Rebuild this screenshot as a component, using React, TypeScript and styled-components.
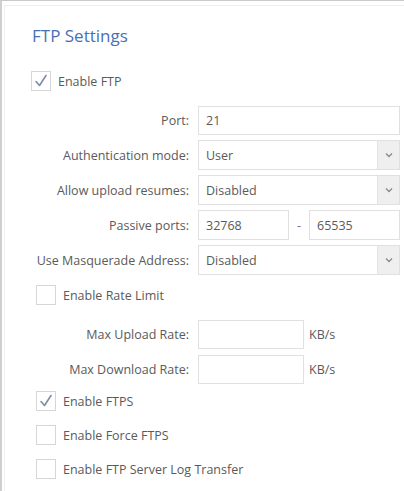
import React from "react";
import styled, { createGlobalStyle } from "styled-components";

const Global = createGlobalStyle`
  html, body { margin: 0; padding: 0; background: #fff; }
  body { font-family: "Open Sans", "Noto Sans", sans-serif; color: #555; }
`;

const Frame = styled.div`
  width: 404px;
  height: 491px;
  box-sizing: border-box;
  border-top: 1px solid #c9c9c9;
  border-left: 2px solid #cfcfcf;
  padding: 4px 0 0 2px;
  overflow: hidden;
`;

const Panel = styled.div`
  border-top: 1px solid #eeeeee;
  border-left: 1px solid #eeeeee;
  padding: 18px 4px 0 26px;
  height: 100%;
  box-sizing: border-box;
`;

const Title = styled.h2`
  margin: 0 0 0 1px;
  font-size: 17px;
  line-height: 24px;
  font-weight: 400;
  color: #4a6fb5;
`;

const CheckRow = styled.label<{ $indent?: number; $mt?: number }>`
  display: flex;
  align-items: center;
  gap: 7px;
  height: 20px;
  margin-top: ${(p) => p.$mt ?? 0}px;
  margin-left: ${(p) => p.$indent ?? 0}px;
  font-size: 12.5px;
  color: #5a5a5a;
`;

const Box = styled.span`
  width: 18px;
  height: 18px;
  border: 1px solid #d6d6d6;
  background: #fff;
  display: flex;
  align-items: center;
  justify-content: center;
  flex: none;
`;

const Form = styled.div<{ $mt?: number; $gap?: number }>`
  display: grid;
  grid-template-columns: 163px 202px;
  column-gap: 9px;
  row-gap: ${(p) => p.$gap ?? 5}px;
  margin-top: ${(p) => p.$mt ?? 0}px;
  margin-left: -5px;
`;

const Label = styled.div`
  text-align: right;
  font-size: 12.5px;
  display: flex;
  align-items: center;
  justify-content: flex-end;
  white-space: nowrap;
  color: #5a5a5a;
`;

const Field = styled.div<{ $h?: number }>`
  height: ${(p) => p.$h ?? 30}px;
  display: flex;
  align-items: center;
`;

const Input = styled.div<{ $w?: number }>`
  box-sizing: border-box;
  height: 100%;
  width: ${(p) => (p.$w ? p.$w + "px" : "100%")};
  border: 1px solid #e0e0e0;
  padding: 0 7px;
  display: flex;
  align-items: center;
  font-size: 12.5px;
  color: #5a5a5a;
  background: #fff;
`;

const Select = styled.div`
  box-sizing: border-box;
  height: 100%;
  width: 100%;
  border: 1px solid #e0e0e0;
  display: flex;
  align-items: stretch;
  font-size: 12.5px;
  color: #5a5a5a;
`;

const SelectText = styled.div`
  flex: 1;
  display: flex;
  align-items: center;
  padding-left: 7px;
`;

const Arrow = styled.div`
  width: 21px;
  background: #efefef;
  border-left: 1px solid #e3e3e3;
  display: flex;
  align-items: center;
  justify-content: center;
`;

const Dash = styled.div`
  width: 20px;
  text-align: center;
  font-size: 12.5px;
  color: #777;
`;

const Unit = styled.div`
  margin-left: 5px;
  font-size: 12.5px;
  color: #5a5a5a;
`;

const Check = () => (
  <svg width="14" height="14" viewBox="0 0 14 14">
    <path d="M2 7.5 L5.5 11.5 L12 1.5" fill="none" stroke="#7d8ca6" strokeWidth="1.6" strokeLinecap="round" strokeLinejoin="round" />
  </svg>
);

const Chevron = () => (
  <svg width="8" height="6" viewBox="0 0 8 6">
    <path d="M1 1.5 L4 4.5 L7 1.5" fill="none" stroke="#8a8a8a" strokeWidth="1.3" />
  </svg>
);

const Checkbox = ({ checked, label, indent, mt }: { checked?: boolean; label: string; indent?: number; mt?: number }) => (
  <CheckRow $indent={indent} $mt={mt}>
    <Box>{checked && <Check />}</Box>
    {label}
  </CheckRow>
);

const Dropdown = ({ value }: { value: string }) => (
  <Select>
    <SelectText>{value}</SelectText>
    <Arrow>
      <Chevron />
    </Arrow>
  </Select>
);

export default function App() {
  return (
    <>
      <Global />
      <Frame>
        <Panel>
          <Title>FTP Settings</Title>
          <Checkbox checked label="Enable FTP" mt={23} />
          <Form $mt={15} $gap={5}>
            <Label>Port:</Label>
            <Field $h={29}>
              <Input>21</Input>
            </Field>
            <Label>Authentication mode:</Label>
            <Field>
              <Dropdown value="User" />
            </Field>
            <Label>Allow upload resumes:</Label>
            <Field>
              <Dropdown value="Disabled" />
            </Field>
            <Label>Passive ports:</Label>
            <Field>
              <Input $w={91}>32768</Input>
              <Dash>-</Dash>
              <Input $w={91}>65535</Input>
            </Field>
            <Label>Use Masquerade Address:</Label>
            <Field>
              <Dropdown value="Disabled" />
            </Field>
          </Form>
          <Checkbox label="Enable Rate Limit" indent={5} mt={10} />
          <Form $mt={15} $gap={6}>
            <Label>Max Upload Rate:</Label>
            <Field $h={29}>
              <Input $w={106} />
              <Unit>KB/s</Unit>
            </Field>
            <Label>Max Download Rate:</Label>
            <Field $h={29}>
              <Input $w={106} />
              <Unit>KB/s</Unit>
            </Field>
          </Form>
          <Checkbox checked label="Enable FTPS" indent={5} mt={7} />
          <Checkbox label="Enable Force FTPS" indent={5} mt={14} />
          <Checkbox label="Enable FTP Server Log Transfer" indent={5} mt={14} />
        </Panel>
      </Frame>
    </>
  );
}
